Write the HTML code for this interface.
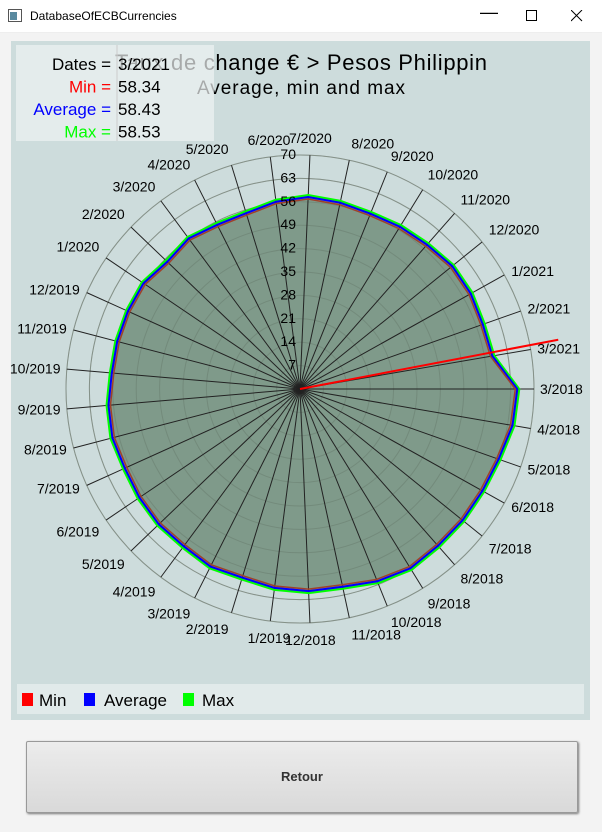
<!DOCTYPE html>
<html><head><meta charset="utf-8"><style>
body{margin:0;width:602px;height:832px;background:#f3f3f3;font-family:"Liberation Sans",sans-serif;overflow:hidden;position:relative}
.tb{position:absolute;left:0;top:0;width:602px;height:32px;background:#fff;border-bottom:1px solid #eee}
.tb span{position:absolute;left:30px;top:9px;font-size:12px;color:#000}
.btn{position:absolute;left:26px;top:741px;width:550px;height:70px;border:1px solid #999;border-radius:2px;background:linear-gradient(#ececec,#d9d9d9);box-shadow:1px 1px 2px #777;text-align:center;line-height:70px;font-weight:bold;font-size:13px;color:#333}
</style></head><body>
<div class="tb"><svg style="position:absolute;left:8px;top:9px" width="14" height="13"><rect x="0.5" y="0.5" width="13" height="12" fill="#fff" stroke="#555"/><rect x="2" y="3" width="7" height="8" fill="#5a8aa0"/></svg><span>DatabaseOfECBCurrencies</span>
<span style="left:480px;top:2px;font-size:18px">&#8212;</span>
<svg style="position:absolute;left:526px;top:10px" width="12" height="12"><rect x="0.5" y="0.5" width="10" height="10" fill="none" stroke="#000"/></svg>
<svg style="position:absolute;left:571px;top:10px" width="12" height="12"><path d="M0 0L11 11M11 0L0 11" stroke="#000"/></svg></div>
<svg id="c" style="position:absolute;left:0;top:0" width="602" height="832"></svg>
<div class="btn">Retour</div>
<script>
var v=[65,64.5,63,62.5,62.5,62.5,63,62,60.5,60.5,60,59,59.5,58.5,58.5,58,57.5,58,57.5,56.5,56.5,56.5,56.5,55,56,55,55,56.5,57.5,57,56.5,57,57.5,58.5,58.5,58,58.4];
var lab=[];var m=3,y=2018;for(var i=0;i<37;i++){lab.push(m+"/"+y);m++;if(m>12){m=1;y++;}}
var cx=300,cy=389,R=234,n=37,s='';
s+='<rect x="11" y="41" width="579" height="679" fill="#cddcdc"/>';
function pt(i,r){var a=i*2*Math.PI/n;return [cx+r*Math.cos(a),cy+r*Math.sin(a)];}
function poly(f){var p=[];for(var i=0;i<n;i++){var q=pt(i,f(i));p.push(q[0].toFixed(1)+","+q[1].toFixed(1));}return p.join(" ");}
for(var k=1;k<=10;k++){s+='<circle cx="'+cx+'" cy="'+cy+'" r="'+(R*k/10)+'" fill="none" stroke="#aaa" stroke-width="1"/>';}
s+='<polygon points="'+poly(function(i){return (v[i]+0.6)/70*R})+'" fill="#7f9a8a"/>';
for(var k=1;k<=10;k++){s+='<circle cx="'+cx+'" cy="'+cy+'" r="'+(R*k/10)+'" fill="none" stroke="#6b8072" stroke-width="1" opacity="0.6"/>';}
for(var i=0;i<n;i++){var q=pt(i,R);s+='<line x1="'+cx+'" y1="'+cy+'" x2="'+q[0]+'" y2="'+q[1]+'" stroke="#222" stroke-width="1"/>';
var a=i*2*Math.PI/n,c=Math.cos(a),sn=Math.sin(a);var L=pt(i,R+6+Math.abs(sn)*4);var an=c>0.15?'start':(c<-0.15?'end':'middle');
var dy=sn<-0.5?-2:(sn>0.5?12:5);s+='<text x="'+L[0].toFixed(1)+'" y="'+(L[1]+dy).toFixed(1)+'" text-anchor="'+an+'" font-size="14">'+lab[i]+'</text>';}
s+='<polygon points="'+poly(function(i){return (v[i]+0.6)/70*R})+'" fill="none" stroke="#0f0" stroke-width="2"/>';
s+='<polygon points="'+poly(function(i){return (v[i])/70*R})+'" fill="none" stroke="#00f" stroke-width="2"/>';
s+='<polygon points="'+poly(function(i){return (v[i]-0.6)/70*R})+'" fill="none" stroke="#a0402a" stroke-width="1.5"/>';
for(var k=1;k<=10;k++){s+='<text x="296" y="'+(cy-R*k/10+4)+'" text-anchor="end" font-size="14">'+(7*k)+'</text>';}
var e=pt(36,262);s+='<line x1="'+cx+'" y1="'+cy+'" x2="'+e[0]+'" y2="'+(e[1]-5)+'" stroke="#f00" stroke-width="2"/>';
s+='<text x="301" y="70" text-anchor="middle" font-size="22" textLength="372" fill="#000">Taux de change € &gt; Pesos Philippin</text>';
s+='<text x="301" y="94" text-anchor="middle" font-size="19" textLength="208" fill="#000">Average, min and max</text>';
s+='<rect x="16" y="45" width="198" height="96" fill="#eef2f2" opacity="0.7"/>';
s+='<line x1="117" y1="45" x2="117" y2="141" stroke="#ccc"/>';
var rows=[["Dates =","3/2021","#000"],["Min =","58.34","#f00"],["Average =","58.43","#00f"],["Max =","58.53","#0f0"]];
for(var i=0;i<4;i++){s+='<text x="111" y="'+(70+i*22.5)+'" text-anchor="end" font-size="17" fill="'+rows[i][2]+'">'+rows[i][0]+'</text><text x="118" y="'+(70+i*22.5)+'" font-size="17">'+rows[i][1]+'</text>';}
s+='<rect x="17" y="684" width="567" height="30" fill="#e1eaea"/>';
s+='<rect x="22" y="693" width="11" height="13" fill="#f00"/><text x="39" y="706" font-size="17">Min</text>';
s+='<rect x="84" y="693" width="11" height="13" fill="#00f"/><text x="104" y="706" font-size="17">Average</text>';
s+='<rect x="183" y="693" width="11" height="13" fill="#0f0"/><text x="202" y="706" font-size="17">Max</text>';
document.getElementById('c').innerHTML=s;
</script>
</body></html>
